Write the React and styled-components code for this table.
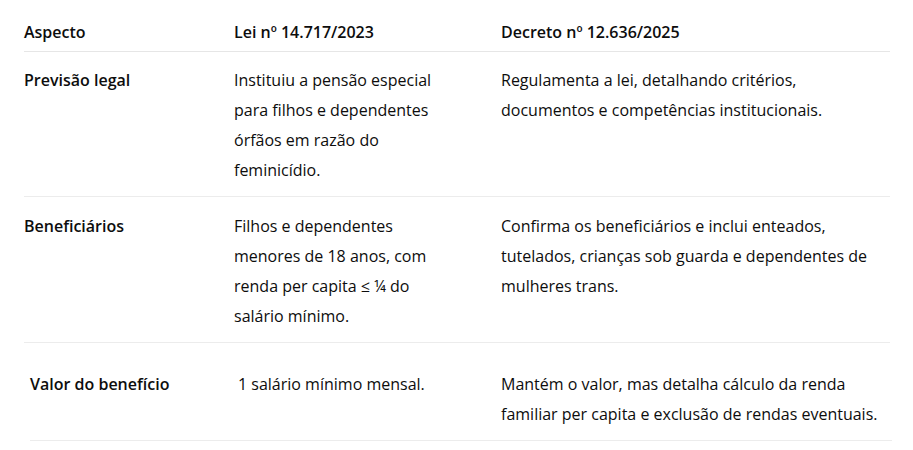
import React from "react";
import styled, { createGlobalStyle } from "styled-components";

const rows = [
  {
    aspect: "Previsão legal",
    lei: "Instituiu a pensão especial para filhos e dependentes órfãos em razão do feminicídio.",
    decreto: "Regulamenta a lei, detalhando critérios, documentos e competências institucionais.",
  },
  {
    aspect: "Beneficiários",
    lei: "Filhos e dependentes menores de 18 anos, com renda per capita ≤ ¼ do salário mínimo.",
    decreto:
      "Confirma os beneficiários e inclui enteados, tutelados, crianças sob guarda e dependentes de mulheres trans.",
  },
  {
    aspect: "Valor do benefício",
    lei: "1 salário mínimo mensal.",
    decreto: "Mantém o valor, mas detalha cálculo da renda familiar per capita e exclusão de rendas eventuais.",
    shifted: true,
  },
];

export default function App() {
  return (
    <>
      <GlobalStyle />
      <Table>
        <HeadRow>
          <HeadCell>Aspecto</HeadCell>
          <HeadCell>Lei nº 14.717/2023</HeadCell>
          <HeadCell>Decreto nº 12.636/2025</HeadCell>
        </HeadRow>
        {rows.map((r) => (
          <Row key={r.aspect} $shifted={r.shifted}>
            <AspectCell>{r.aspect}</AspectCell>
            <LeiCell>{r.lei}</LeiCell>
            <Cell>{r.decreto}</Cell>
          </Row>
        ))}
      </Table>
    </>
  );
}

const GlobalStyle = createGlobalStyle`
  body {
    margin: 0;
    background: #fff;
    font-family: "Open Sans", "Noto Sans", sans-serif;
    color: #0d0d0d;
  }
`;

const Table = styled.div`
  width: 866px;
  margin-left: 24px;
  display: flex;
  flex-direction: column;
`;

const HeadRow = styled.div`
  display: grid;
  grid-template-columns: 210px 267px 1fr;
  border-bottom: 1px solid #e6e6e6;
  padding: 20px 0 7px;
`;

const Row = styled.div`
  display: grid;
  grid-template-columns: 210px 267px 1fr;
  border-bottom: 1px solid #ececec;
  padding: 13px 0 11px;
  &:nth-child(3) {
    padding-top: 14px;
  }
  ${(p) =>
    p.$shifted &&
    `
    margin: 0 -2px 0 6px;
    padding: 26px 0 11px;
    grid-template-columns: 208px 263px 1fr;
  `}
`;

const HeadCell = styled.div`
  font-size: 16px;
  font-weight: 600;
  line-height: 24px;
`;

const Cell = styled.div`
  font-size: 16px;
  line-height: 30px;
`;

const LeiCell = styled(Cell)`
  padding-right: 48px;
`;

const AspectCell = styled(Cell)`
  font-weight: 600;
  padding-right: 16px;
`;
